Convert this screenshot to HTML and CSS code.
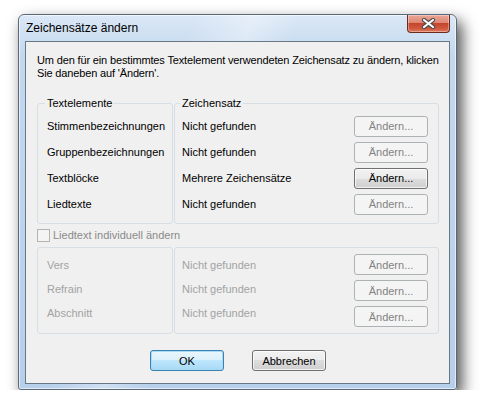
FILE: index.html
```html
<!DOCTYPE html>
<html lang="de">
<head>
    <meta charset="UTF-8">
    <title>Zeichensätze ändern</title>
    <link rel="stylesheet" href="styles.css">
</head>
<body>
    <div class="window">
        <div class="titlebar">
            <span class="title">Zeichensätze ändern</span>
            <button class="close-btn" aria-label="Schließen">
                <svg width="15" height="11" viewBox="0 0 15 11">
                    <path d="M3 2 L12 9 M12 2 L3 9" stroke="#4a4a4a" stroke-width="4.2" stroke-linecap="round" fill="none"/>
                    <path d="M3 2 L12 9 M12 2 L3 9" stroke="#ffffff" stroke-width="2.2" stroke-linecap="round" fill="none"/>
                </svg>
            </button>
        </div>

        <div class="client">
            <p class="intro">Um den für ein bestimmtes Textelement verwendeten Zeichensatz zu ändern, klicken<br>Sie daneben auf 'Ändern'.</p>

            <div class="groups">
                <fieldset class="group group-names">
                    <legend>Textelemente</legend>
                    <div class="row">Stimmenbezeichnungen</div>
                    <div class="row">Gruppenbezeichnungen</div>
                    <div class="row">Textblöcke</div>
                    <div class="row">Liedtexte</div>
                </fieldset>
                <fieldset class="group group-fonts">
                    <legend>Zeichensatz</legend>
                    <div class="row"><span>Nicht gefunden</span><button class="btn" disabled>Ändern...</button></div>
                    <div class="row"><span>Nicht gefunden</span><button class="btn" disabled>Ändern...</button></div>
                    <div class="row"><span>Mehrere Zeichensätze</span><button class="btn">Ändern...</button></div>
                    <div class="row"><span>Nicht gefunden</span><button class="btn" disabled>Ändern...</button></div>
                </fieldset>
            </div>

            <label class="check"><span class="box"></span>Liedtext individuell ändern</label>

            <div class="groups lyrics">
                <fieldset class="group group-names">
                    <div class="list">
                        <div class="row">Vers</div>
                        <div class="row">Refrain</div>
                        <div class="row">Abschnitt</div>
                    </div>
                </fieldset>
                <fieldset class="group group-fonts">
                    <div class="split">
                        <div class="list">
                            <div class="row">Nicht gefunden</div>
                            <div class="row">Nicht gefunden</div>
                            <div class="row">Nicht gefunden</div>
                        </div>
                        <div class="btn-list">
                            <button class="btn" disabled>Ändern...</button>
                            <button class="btn" disabled>Ändern...</button>
                            <button class="btn" disabled>Ändern...</button>
                        </div>
                    </div>
                </fieldset>
            </div>

            <div class="actions">
                <button class="btn default">OK</button>
                <button class="btn">Abbrechen</button>
            </div>
        </div>
    </div>
</body>
</html>
```

FILE: styles.css
```css
* {
    box-sizing: border-box;
}

body {
    margin: 0;
    background: #ffffff;
    font-family: "Liberation Sans", Arial, sans-serif;
    font-size: 11px;
    color: #000;
}

/* window frame */
.window {
    width: 439px;
    margin: 14px 0 0 18px;
    padding: 0 6px 5px 6px;
    border: 1px solid #5b6877;
    border-radius: 6px 6px 3px 3px;
    background:
        linear-gradient(112deg, rgba(255,255,255,0) 30%, rgba(255,255,255,.35) 40%, rgba(255,255,255,0) 48%),
        linear-gradient(#dbe8f6, #c3d8ef 40px, #b6cfeb);
    box-shadow: inset 0 0 0 1px rgba(255,255,255,.6), 5px 7px 15px rgba(0,0,0,.7);
}

.titlebar {
    height: 26px;
    display: flex;
    justify-content: space-between;
    align-items: flex-start;
}

.title {
    font-size: 12px;
    line-height: 26px;
    padding-left: 1px;
}

.close-btn {
    width: 43px;
    height: 18px;
    padding: 0;
    border: 1px solid #6a2a20;
    border-top: none;
    border-radius: 0 0 4px 4px;
    background: linear-gradient(#e9a797 0%, #dd8572 48%, #c5452c 50%, #cf5a40 80%, #e07a5c 100%);
    box-shadow: inset 0 0 0 1px rgba(255,255,255,.35);
    display: flex;
    align-items: center;
    justify-content: center;
}

/* client area */
.client {
    height: 343px;
    border: 1px solid #6a7784;
    background: #f0f0f0;
    padding: 12px 10px 0 11px;
}

.intro {
    margin: 0 -10px 17px 0;
    line-height: 13px;
    white-space: nowrap;
    letter-spacing: -0.15px;
}

.groups {
    display: flex;
    gap: 1px;
}

.group {
    margin: 0;
    min-width: 0;
    border: 1px solid #d5dfe5;
    border-radius: 3px;
    padding: 3px 10px 6px 9px;
}

.group legend {
    padding: 0 2px;
    margin-left: -2px;
    line-height: 13px;
}

.group-names {
    width: 136px;
}

.group-fonts {
    width: 265px;
    padding-left: 7px;
}

.row {
    height: 26px;
    display: flex;
    align-items: center;
    justify-content: space-between;
    white-space: nowrap;
}

/* checkbox */
.check {
    display: flex;
    align-items: center;
    height: 13px;
    margin: 5px 0;
    color: #8a8a8a;
    line-height: 13px;
}

.check .box {
    width: 13px;
    height: 13px;
    margin-right: 3px;
    border: 1px solid #b3b3b3;
    background: #f4f4f4;
}

/* lyrics section (disabled) */
.lyrics .group {
    padding-top: 4px;
    color: #a3a3a3;
}

.lyrics .list {
    margin-top: 1px;
}

.lyrics .list .row {
    height: 24px;
}

.split {
    display: flex;
    justify-content: space-between;
}

.btn-list {
    display: flex;
    flex-direction: column;
    gap: 5px;
    padding-top: 2px;
}

/* buttons */
.btn {
    width: 74px;
    height: 21px;
    padding: 0;
    font: inherit;
    color: #000;
    border: 1px solid #707070;
    border-radius: 3px;
    background: linear-gradient(#f2f2f2 0%, #ebebeb 50%, #dddddd 50%, #cfcfcf 100%);
    box-shadow: inset 0 0 0 1px rgba(255,255,255,.7);
}

.btn:disabled {
    color: #838383;
    border-color: #adb2b5;
    background: #f4f4f4;
    box-shadow: none;
}

.btn.default {
    border-color: #3c7fb1;
    background: linear-gradient(#eaf6fd 0%, #d9f0fc 50%, #bee6fd 50%, #a7d9f5 100%);
    box-shadow: inset 0 0 0 1px #a6dcf6;
}

.actions {
    display: flex;
    justify-content: center;
    gap: 28px;
    margin-top: 16px;
}
```
